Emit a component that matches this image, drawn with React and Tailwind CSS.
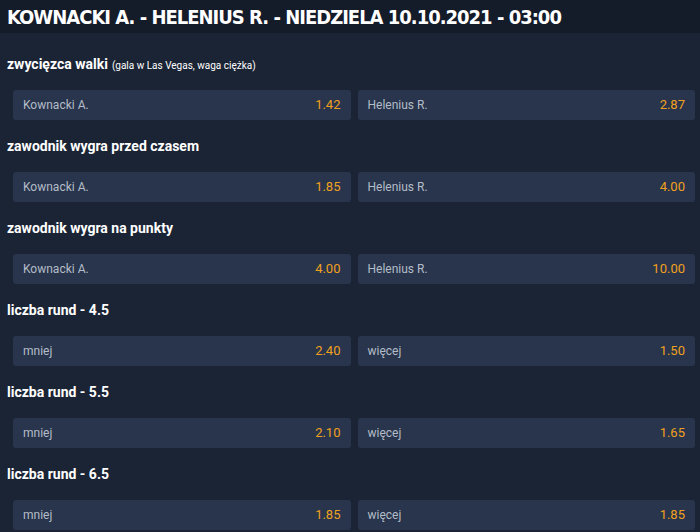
import React from 'react';

// Markets for the fight, each with two selections
const markets = [
  {
    title: 'zwycięzca walki',
    note: '(gala w Las Vegas, waga ciężka)',
    odds: [['Kownacki A.', '1.42'], ['Helenius R.', '2.87']],
  },
  { title: 'zawodnik wygra przed czasem', odds: [['Kownacki A.', '1.85'], ['Helenius R.', '4.00']] },
  { title: 'zawodnik wygra na punkty', odds: [['Kownacki A.', '4.00'], ['Helenius R.', '10.00']] },
  { title: 'liczba rund - 4.5', odds: [['mniej', '2.40'], ['więcej', '1.50']] },
  { title: 'liczba rund - 5.5', odds: [['mniej', '2.10'], ['więcej', '1.65']] },
  { title: 'liczba rund - 6.5', odds: [['mniej', '1.85'], ['więcej', '1.85']] },
];

const OddButton = ({ label, price }) => (
  <div className="flex-1 h-[30px] flex items-center justify-between pl-[10px] pr-[10px] bg-[#28354c] rounded-[3px]">
    <span className="text-[12px] text-[#b4bcc8]">{label}</span>
    <span className="text-[13px] text-[#f0a020]">{price}</span>
  </div>
);

const Market = ({ title, note, odds }) => (
  <div>
    <div className="h-[52px] flex items-center px-[7px] text-white">
      <span className="text-[14px] font-bold">{title}</span>
      {note && <span className="text-[10px] ml-[4px] mt-[2px]">{note}</span>}
    </div>
    <div className="flex gap-[7px] pl-[13px] pr-[5px]">
      {odds.map(([label, price]) => (
        <OddButton key={label} label={label} price={price} />
      ))}
    </div>
  </div>
);

export default function App() {
  return (
    <div className="w-[700px] h-[532px] overflow-hidden bg-[#1b2435]" style={{ fontFamily: 'Roboto, "Liberation Sans", sans-serif' }}>
      <div className="h-[33px] bg-[#141b29] flex items-center px-[7px]">
        <h1
          className="text-white text-[20px] font-bold tracking-[-1px] whitespace-nowrap"
          style={{ fontFamily: '"DejaVu Sans Condensed", "Liberation Sans Narrow", sans-serif' }}
        >
          KOWNACKI A. - HELENIUS R. - NIEDZIELA 10.10.2021 - 03:00
        </h1>
      </div>
      <div className="pt-[5px]">
        {markets.map((m) => (
          <Market key={m.title} {...m} />
        ))}
      </div>
    </div>
  );
}
